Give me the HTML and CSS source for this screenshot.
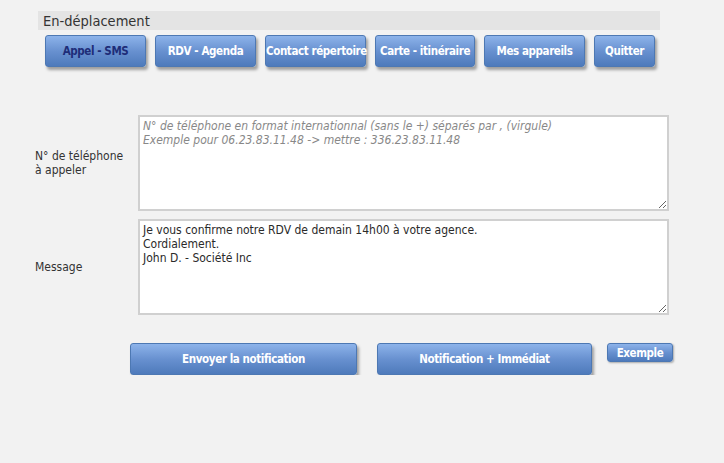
FILE: index.html
```html
<!DOCTYPE html>
<html lang="fr">
<head>
<meta charset="utf-8">
<link rel="stylesheet" href="styles.css">
</head>
<body>
<div class="page">
  <div class="title">En-déplacement</div>
  <nav class="menu">
    <button class="btn tab active w101">Appel - SMS</button>
    <button class="btn tab w101">RDV - Agenda</button>
    <button class="btn tab w101">Contact répertoire</button>
    <button class="btn tab w100">Carte - itinéraire</button>
    <button class="btn tab w101">Mes appareils</button>
    <button class="btn tab w61">Quitter</button>
  </nav>
  <div class="form">
    <div class="row">
      <label class="label">N° de téléphone<br>à appeler</label>
      <textarea class="field" placeholder="N° de téléphone en format internationnal (sans le +) séparés par , (virgule)&#10;Exemple pour 06.23.83.11.48 -> mettre : 336.23.83.11.48"></textarea>
    </div>
    <div class="row">
      <label class="label">Message</label>
      <textarea class="field">Je vous confirme notre RDV de demain 14h00 à votre agence.
Cordialement.
John D. - Société Inc</textarea>
    </div>
  </div>
  <div class="actions">
    <button class="btn big w227">Envoyer la notification</button>
    <button class="btn big w215">Notification + Immédiat</button>
    <button class="btn small">Exemple</button>
  </div>
</div>
</body>
</html>
```
FILE: styles.css
```css
html, body {
  margin: 0;
  padding: 0;
  background: #f2f2f2;
}
body {
  font-family: "DejaVu Sans Condensed", "DejaVu Sans", sans-serif;
  color: #333;
}
.page {
  padding: 11px 0 0 38px;
}
.title {
  width: 617px;
  height: 19px;
  background: #e4e4e4;
  padding-left: 5px;
  font-family: "DejaVu Sans Condensed", sans-serif;
  font-size: 14.5px;
  line-height: 20px;
  color: #333;
}
.menu {
  display: flex;
  gap: 9px;
  margin: 5px 0 0 7px;
}
.btn {
  box-sizing: border-box;
  border: 1px solid #4d78b3;
  border-radius: 3px;
  background: linear-gradient(#8db3ea, #6891d0 50%, #4e7abb);
  color: #fff;
  font-family: "DejaVu Sans Condensed", sans-serif;
  font-weight: bold;
  font-size: 11.5px;
  letter-spacing: -0.4px;
  white-space: nowrap;
  box-shadow: 2px 3px 3px rgba(0, 0, 0, 0.35);
  padding: 0;
  cursor: pointer;
}
.tab {
  height: 32px;
}
.tab.active {
  color: #1e2d78;
}
.w101 { width: 101px; }
.w100 { width: 100px; }
.w61 { width: 61px; }
.form {
  margin-top: 48px;
  display: flex;
  flex-direction: column;
  gap: 8px;
}
.row {
  display: flex;
  align-items: center;
}
.label {
  width: 103px;
  margin-left: -3px;
  font-size: 12px;
  line-height: 14px;
  color: #333;
  font-family: "DejaVu Sans Condensed", sans-serif;
}
.field {
  box-sizing: border-box;
  width: 531px;
  height: 96px;
  border: 2px solid #d0d0d0;
  background: #fff;
  padding: 2px 3px;
  font-family: "DejaVu Sans Condensed", sans-serif;
  font-size: 12px;
  line-height: 14px;
  color: #2a2a2a;
  resize: vertical;
  margin: 0;
}
.field::placeholder {
  color: #888;
  font-style: italic;
}
.actions {
  display: flex;
  align-items: flex-start;
  margin: 28px 0 0 92px;
}
.big {
  height: 32px;
}
.w227 { width: 227px; margin-right: 20px; }
.w215 { width: 215px; margin-right: 15px; }
.small {
  width: 66px;
  height: 19px;
  font-size: 11.5px;
  box-shadow: 1px 1px 2px rgba(0, 0, 0, 0.3);
}
```
